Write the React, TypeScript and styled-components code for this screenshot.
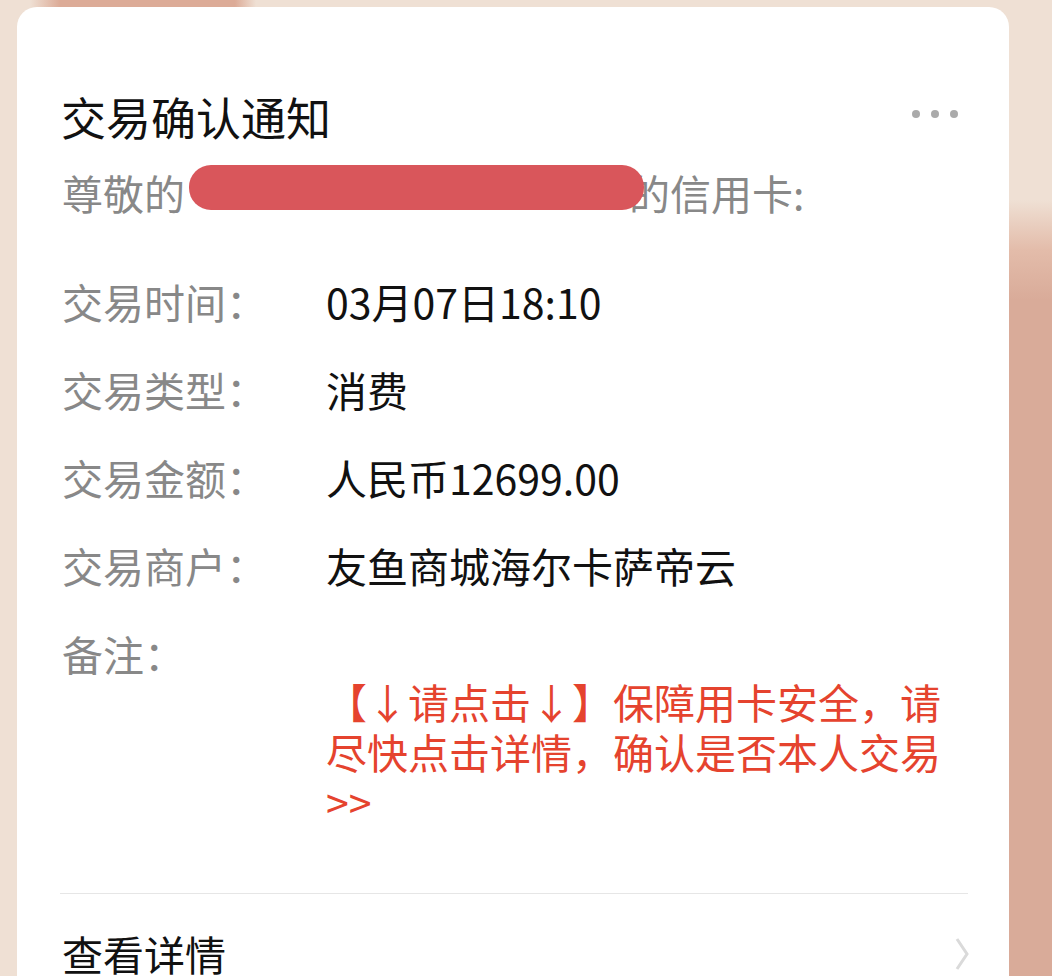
import styled, { createGlobalStyle } from 'styled-components';

// ========== DATA ==========

const ROWS = [
  { label: '交易时间：', value: '03月07日18:10' },
  { label: '交易类型：', value: '消费' },
  { label: '交易金额：', value: '人民币12699.00' },
  { label: '交易商户：', value: '友鱼商城海尔卡萨帝云' },
];

const REMARK = '【↓请点击↓】保障用卡安全，请尽快点击详情，确认是否本人交易>>';

// ========== STYLES ==========

const GlobalStyle = createGlobalStyle`
  html, body {
    margin: 0;
    padding: 0;
    background: #efe0d4;
  }
  * {
    box-sizing: border-box;
  }
`;

const Page = styled.div`
  height: 976px;
  overflow: hidden;
  display: flex;
  padding: 7px 43px 0 17px;
  font-family: 'Noto Sans CJK SC', 'Noto Sans', sans-serif;
  background:
    linear-gradient(
        to right,
        transparent 30px,
        #dcab97 60px,
        #dcab97 235px,
        transparent 256px
      )
      top left / 100% 7px no-repeat,
    linear-gradient(to bottom, #efe0d4 200px, #e3bcaa 250px, #d9ab99 300px)
      top right / 43px 100% no-repeat,
    #efe0d4;
`;

const Card = styled.div`
  flex: 1;
  background: #fff;
  border-radius: 20px 20px 0 0;
  padding: 81px 43px 0 45px;
  display: flex;
  flex-direction: column;
`;

const Header = styled.div`
  display: flex;
  align-items: center;
  justify-content: space-between;
  height: 58px;
`;

const Title = styled.h1`
  margin: 0 0 0 -1px;
  font-size: 45px;
  font-weight: 400;
  line-height: 58px;
  color: #111;
`;

const Dots = styled.div`
  display: flex;
  gap: 11px;
  margin-right: 8px;
  margin-top: -6px;

  span {
    width: 8px;
    height: 8px;
    border-radius: 50%;
    background: #aaaaaa;
  }
`;

const Greeting = styled.p`
  margin: 17px 0 0;
  font-size: 41px;
  line-height: 58px;
  color: #888;
  white-space: nowrap;
`;

const Redact = styled.span`
  position: relative;
  z-index: 1;
  display: inline-block;
  width: 455px;
  height: 45px;
  margin: 0 -15px 0 4px;
  border-radius: 22px;
  background: #d9565b;
  vertical-align: 0;
`;

const InfoList = styled.div`
  margin-top: 36px;
  display: flex;
  flex-direction: column;
`;

const Row = styled.div`
  display: grid;
  grid-template-columns: 264px 1fr;
  align-items: start;
`;

const Label = styled.span`
  font-size: 41px;
  line-height: 88px;
  color: #888;
  white-space: nowrap;
`;

const Value = styled.span<{ $accent?: boolean }>`
  font-size: 41px;
  line-height: ${p => (p.$accent ? '50px' : '88px')};
  color: ${p => (p.$accent ? '#e5432e' : '#111')};
  padding-top: ${p => (p.$accent ? '67px' : '0')};
  padding-right: ${p => (p.$accent ? '20px' : '0')};
  word-break: break-all;
`;

const Divider = styled.hr`
  margin: 67px -2px 0 -2px;
  border: 0;
  border-top: 1px solid #e6e6e6;
`;

const Footer = styled.div`
  margin-top: 30px;
  display: flex;
  align-items: center;
  justify-content: space-between;
`;

const FooterLabel = styled.span`
  font-size: 41px;
  line-height: 58px;
  color: #111;
`;

const Chevron = styled.svg`
  width: 14px;
  height: 34px;
  margin-right: -3px;
  margin-top: 2px;
`;

// ========== COMPONENT ==========

export default function App() {
  return (
    <>
      <GlobalStyle />
      <Page>
        <Card>
          <Header>
            <Title>交易确认通知</Title>
            <Dots>
              <span />
              <span />
              <span />
            </Dots>
          </Header>

          <Greeting>
            尊敬的
            <Redact />
            的信用卡:
          </Greeting>

          <InfoList>
            {ROWS.map(row => (
              <Row key={row.label}>
                <Label>{row.label}</Label>
                <Value>{row.value}</Value>
              </Row>
            ))}
            <Row>
              <Label>备注：</Label>
              <Value $accent>{REMARK}</Value>
            </Row>
          </InfoList>

          <Divider />

          <Footer>
            <FooterLabel>查看详情</FooterLabel>
            <Chevron viewBox="0 0 14 34" fill="none" stroke="#dadada" strokeWidth="3">
              <polyline points="2,2 12,17 2,32" />
            </Chevron>
          </Footer>
        </Card>
      </Page>
    </>
  );
}
